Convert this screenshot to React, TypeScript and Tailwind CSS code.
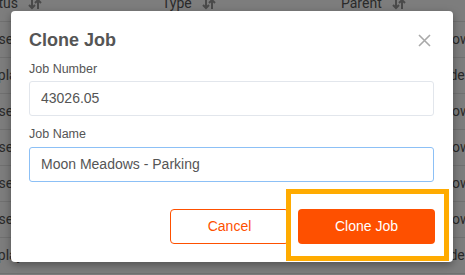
import React from "react";

type Row = { status: string; parent: string };

const rows: Row[] = [
  { status: "Closed", parent: "Show" },
  { status: "Displayed", parent: "Hide" },
  { status: "Closed", parent: "Show" },
  { status: "Closed", parent: "Show" },
  { status: "Closed", parent: "Show" },
  { status: "Closed", parent: "Show" },
  { status: "Displayed", parent: "Hide" },
];

const SortIcon: React.FC = () => (
  <svg width="14" height="12" viewBox="0 0 14 12" className="ml-[10px]">
    <path d="M4 1v9M1 7l3 3 3-3" stroke="#4a4a4a" strokeWidth="2" fill="none" />
    <path d="M10 11V2M7 5l3-3 3 3" stroke="#4a4a4a" strokeWidth="2" fill="none" />
  </svg>
);

const App: React.FC = () => {
  return (
    <div
      className="relative w-[465px] h-[275px] overflow-hidden bg-[#7d7d7d]"
      style={{ fontFamily: "Roboto, 'Liberation Sans', sans-serif" }}
    >
      {/* Table behind the overlay */}
      <div className="-mt-[14px] -ml-[22px] w-[520px] text-[14px] text-[#2a2a2a]">
        <div className="flex items-center h-[36px] border-b border-[#707070]">
          <div className="flex items-center w-[184px]">
            Status <SortIcon />
          </div>
          <div className="flex items-center w-[179px]">
            Type <SortIcon />
          </div>
          <div className="flex items-center">
            Parent <SortIcon />
          </div>
        </div>
        {rows.map((r, i) => (
          <div key={i} className="flex items-center h-[36px] border-b border-[#707070]">
            <div className="w-[458px] shrink-0">{r.status}</div>
            <div className="whitespace-nowrap">{r.parent}</div>
          </div>
        ))}
      </div>

      {/* Clone modal */}
      <div
        className="absolute left-[11px] top-[11px] w-[442px] h-[251px] bg-white rounded-[4px] shadow-[0_3px_8px_rgba(0,0,0,0.35)] flex flex-col pl-[18px] pr-[19px]"
        style={{ fontFamily: "'Liberation Sans', Arial, sans-serif" }}
      >
        <div className="flex items-center justify-between pt-[18px] h-[40px]">
          <h2 className="text-[18px] leading-[22px] font-bold text-[#555]">Clone Job</h2>
          <button className="mr-[3px]" aria-label="Close">
            <svg width="13" height="13" viewBox="0 0 13 13">
              <path d="M1 1l11 11M12 1L1 12" stroke="#a9a9a9" strokeWidth="1.6" />
            </svg>
          </button>
        </div>

        <label className="mt-[10px] text-[12.5px] leading-[16px] text-[#555]">Job Number</label>
        <div className="mt-[4px] h-[35px] border border-[#e2e6ec] rounded-[3px] px-[11px] flex items-center text-[14px] text-[#555]">
          43026.05
        </div>

        <label className="mt-[10px] text-[12.5px] leading-[16px] text-[#555]">Job Name</label>
        <div className="mt-[5px] h-[35px] border border-[#8cc0f6] rounded-[3px] px-[11px] flex items-center text-[14px] text-[#555]">
          Moon Meadows - Parking
        </div>

        <div className="mt-[27px] flex justify-end gap-[9px] -mr-px">
          <button className="w-[119px] h-[35px] border border-[#fe5000] rounded-[4px] text-[14px] text-[#fe5000]">
            Cancel
          </button>
          <button className="w-[137px] h-[35px] bg-[#fe5000] rounded-[4px] text-[14px] text-white">
            Clone Job
          </button>
        </div>
      </div>

      {/* Highlight annotation */}
      <div className="absolute left-[286px] top-[189px] w-[163px] h-[72px] border-[5px] border-[#ffab00]" />
    </div>
  );
};

export default App;
